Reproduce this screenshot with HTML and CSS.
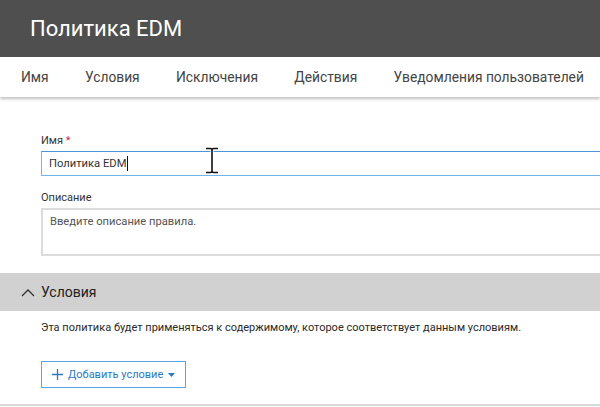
FILE: index.html
```html
<!DOCTYPE html>
<html lang="ru">
<head>
<meta charset="utf-8">
<link rel="stylesheet" href="styles.css">
</head>
<body>
<div class="page">
  <header class="titlebar">
    <h1 class="title">Политика EDM</h1>
  </header>
  <nav class="tabs">
    <span class="tab">Имя</span>
    <span class="tab">Условия</span>
    <span class="tab">Исключения</span>
    <span class="tab">Действия</span>
    <span class="tab">Уведомления пользователей</span>
  </nav>
  <main class="form">
    <div class="field">
      <label class="label">Имя <span class="req">*</span></label>
      <div class="input focused"><span class="value">Политика EDM</span><span class="caret"></span></div>
      <svg class="ibeam" width="14" height="27" viewBox="0 0 14 27">
        <path d="M1 1.5h4.5q1.5 0 1.5 1.5v21q0 1.5 -1.5 1.5H1M13 1.5H8.5q-1.5 0 -1.5 1.5v21q0 1.5 1.5 1.5H13" fill="none" stroke="#fff" stroke-width="3.2"/>
        <path d="M1 1.5h4.5q1.5 0 1.5 1.5v21q0 1.5 -1.5 1.5H1M13 1.5H8.5q-1.5 0 -1.5 1.5v21q0 1.5 1.5 1.5H13" fill="none" stroke="#111" stroke-width="1.6"/>
      </svg>
    </div>
    <div class="field">
      <label class="label">Описание</label>
      <div class="textarea">Введите описание правила.</div>
    </div>
  </main>
  <section class="section">
    <div class="section-head">
      <svg class="chev" width="14" height="9" viewBox="0 0 14 9"><path d="M1 8L7 2l6 6" fill="none" stroke="#333" stroke-width="1.3"/></svg>
      <span class="section-title">Условия</span>
    </div>
    <div class="section-body">
      <p class="desc">Эта политика будет применяться к содержимому, которое соответствует данным условиям.</p>
      <button class="add-btn">
        <svg width="11" height="11" viewBox="0 0 11 11"><path d="M5.5 0v11M0 5.5h11" stroke="#2b78c5" stroke-width="1.3"/></svg>
        <span>Добавить условие</span>
        <svg width="7" height="4" viewBox="0 0 7 4"><path d="M0 0h7L3.5 4z" fill="#2b78c5"/></svg>
      </button>
    </div>
  </section>
  <div class="bottom-line"></div>
</div>
</body>
</html>
```

FILE: styles.css
```css
* { box-sizing: border-box; }
html, body { margin: 0; padding: 0; }
body {
  width: 600px;
  height: 407px;
  overflow: hidden;
  background: #fff;
  font-family: Roboto, "Noto Sans", sans-serif;
  color: #333;
}
.page { width: 600px; }
.titlebar {
  height: 57px;
  background: #4f4f4f;
  padding: 0 0 0 30px;
  display: flex;
  align-items: center;
}
.title {
  margin: 0;
  font-weight: 400;
  font-size: 22px;
  color: #fff;
}
.tabs {
  height: 40px;
  display: flex;
  align-items: center;
  gap: 36.3px;
  padding-left: 21px;
  background: #fff;
  box-shadow: 0 2px 3px rgba(0,0,0,0.25);
  position: relative;
  white-space: nowrap;
}
.tab {
  font-size: 13.8px;
  color: #444;
}
.form {
  padding: 37px 0 0 41px;
  width: 600px;
}
.field { position: relative; margin-bottom: 15px; }
.field:last-child { margin-bottom: 0; }
.label {
  display: block;
  font-size: 11px;
  line-height: 14px;
  color: #333;
  margin-bottom: 3px;
}
.req { color: #c4314b; }
.input {
  height: 25px;
  border: 1.5px solid #74b4ea;
  border-top-color: #4b95d8;
  border-right: 0;
  display: flex;
  align-items: center;
  padding-left: 7px;
  font-size: 11.2px;
  color: #333;
}
.caret {
  display: inline-block;
  width: 1px;
  height: 15px;
  background: #111;
  margin-left: 1px;
}
.ibeam {
  position: absolute;
  left: 164px;
  top: 13px;
}
.textarea {
  height: 48px;
  border: 2px solid #dcdcdc;
  border-right: 0;
  padding: 5px 7px;
  font-size: 11.2px;
  color: #555;
}
.section { margin-top: 17px; }
.section-head {
  height: 38px;
  background: #d1d1d1;
  display: flex;
  align-items: center;
  padding-left: 21px;
  gap: 6px;
}
.section-title {
  font-size: 14px;
  color: #222;
}
.section-body {
  padding: 9px 0 0 41px;
}
.desc {
  margin: 0 0 25px;
  font-size: 11px;
  line-height: 16px;
  color: #2a2a2a;
  white-space: nowrap;
}
.add-btn {
  display: inline-flex;
  align-items: center;
  gap: 5px;
  height: 27px;
  padding: 0 10px 0 10px;
  background: #fff;
  border: 1px solid #5aa5e6;
  font-family: inherit;
  font-size: 11px;
  color: #2b78c5;
}
.bottom-line {
  margin-top: 16px;
  height: 2px;
  background: #d8d8d8;
}
```
